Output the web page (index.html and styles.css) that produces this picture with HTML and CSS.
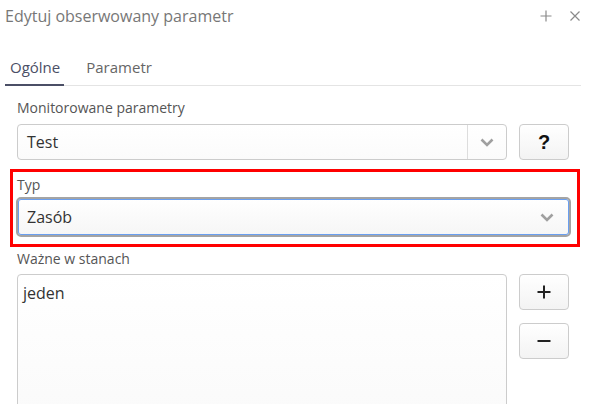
FILE: index.html
```html
<!DOCTYPE html>
<html lang="pl">
<head>
<meta charset="utf-8">
<title>Edytuj obserwowany parametr</title>
<link rel="stylesheet" href="styles.css">
</head>
<body>
<div class="dialog">
  <div class="header">
    <div class="title">Edytuj obserwowany parametr</div>
    <div class="header-icons">
      <svg class="hicon" width="12" height="12" viewBox="0 0 12 12"><path d="M6 0.5V11.5M0.5 6H11.5" stroke="#8a8a8a" stroke-width="1.2" fill="none"/></svg>
      <svg class="hicon" width="10" height="10" viewBox="0 0 10 10"><path d="M0.5 0.5L9.5 9.5M9.5 0.5L0.5 9.5" stroke="#8a8a8a" stroke-width="1.2" fill="none"/></svg>
    </div>
  </div>
  <div class="tabs">
    <div class="tab active">Ogólne</div>
    <div class="tab">Parametr</div>
  </div>
  <div class="content">
    <div class="field">
      <div class="label">Monitorowane parametry</div>
      <div class="row">
        <div class="select">
          <span class="value">Test</span>
          <span class="arrow divided">
            <svg width="14" height="9" viewBox="0 0 14 9"><path d="M1.5 1.5L7 7L12.5 1.5" stroke="#a0a0a0" stroke-width="2.6" fill="none"/></svg>
          </span>
        </div>
        <div class="btn q">?</div>
      </div>
    </div>
    <div class="highlight">
      <div class="label">Typ</div>
      <div class="select focused">
        <span class="value">Zasób</span>
        <span class="arrow">
          <svg width="14" height="9" viewBox="0 0 14 9"><path d="M1.5 1.5L7 7L12.5 1.5" stroke="#a0a0a0" stroke-width="2.6" fill="none"/></svg>
        </span>
      </div>
    </div>
    <div class="field states">
      <div class="label">Ważne w stanach</div>
      <div class="row">
        <div class="listbox"><div class="item">jeden</div></div>
        <div class="btns">
          <div class="btn">
            <svg width="16" height="16" viewBox="0 0 16 16"><path d="M8 1.5V14.5M1.5 8H14.5" stroke="#222" stroke-width="2" fill="none"/></svg>
          </div>
          <div class="btn">
            <svg width="16" height="16" viewBox="0 0 16 16"><path d="M1.5 8H14.5" stroke="#222" stroke-width="2" fill="none"/></svg>
          </div>
        </div>
      </div>
    </div>
  </div>
</div>
</body>
</html>
```
FILE: styles.css
```css
html, body {
  margin: 0;
  padding: 0;
  background: #fff;
  overflow: hidden;
}
body {
  font-family: "Open Sans", "DejaVu Sans", sans-serif;
  color: #333;
}
.header {
  height: 32px;
  display: flex;
  align-items: center;
  justify-content: space-between;
  padding: 0 11px 0 5px;
}
.title {
  font-size: 16px;
  color: #777;
  line-height: 20px;
}
.header-icons {
  display: flex;
  align-items: center;
  gap: 18px;
}
.hicon {
  display: block;
}
.tabs {
  display: flex;
  gap: 17px;
  margin: 0 10px 0 5px;
  border-bottom: 1px solid #e4e4e4;
}
.tab {
  font-size: 15px;
  line-height: 20px;
  padding: 25px 4px 7px 5px;
  color: #666;
  border-bottom: 2px solid transparent;
  margin-bottom: -1px;
}
.tab.active {
  color: #4b4f66;
  border-bottom-color: #4b4f66;
}
.content {
  padding: 13px 22px 0 17px;
}
.label {
  font-size: 14px;
  line-height: 18px;
  color: #555;
}
.field .label {
  margin-bottom: 7px;
}
.row {
  display: flex;
  gap: 12px;
  align-items: flex-start;
}
.select {
  flex: 1;
  height: 36px;
  box-sizing: border-box;
  border: 1px solid #ccc;
  border-radius: 4px;
  background: linear-gradient(#fff, #fbfbfb);
  display: flex;
  align-items: center;
}
.value {
  flex: 1;
  font-size: 16px;
  padding-left: 9px;
  color: #333;
}
.arrow {
  width: 38px;
  align-self: stretch;
  display: flex;
  align-items: center;
  justify-content: center;
}
.arrow.divided {
  border-left: 1px solid #ddd;
}
.btn {
  width: 50px;
  height: 36px;
  box-sizing: border-box;
  border: 1px solid #ccc;
  border-radius: 4px;
  background: linear-gradient(#fff, #f3f3f3);
  display: flex;
  align-items: center;
  justify-content: center;
}
.btn.q {
  font-family: "Liberation Sans", Arial, sans-serif;
  font-weight: 700;
  font-size: 20px;
  color: #111;
}
.highlight {
  margin: 9px -11px 0 -7px;
  border: 3px solid #f00;
  padding: 4px 6px 7px 3px;
}
.highlight .label {
  margin-bottom: 3px;
  padding-left: 1px;
}
.select.focused {
  height: 40px;
  border: 2px solid #a4a4a4;
  box-shadow: inset 0 0 0 1px #6a9ff0;
  border-radius: 5px;
  background: linear-gradient(#fff, #f6f6f6);
}
.select.focused .value {
  padding-left: 9px;
}
.select.focused .arrow {
  width: 44px;
}
.states {
  margin-top: 3px;
}
.states .label {
  margin-bottom: 6px;
}
.listbox {
  flex: 1;
  height: 150px;
  box-sizing: border-box;
  border: 1px solid #ccc;
  border-radius: 4px;
  background: linear-gradient(#fff, #fafafa);
  padding: 8px 5px;
}
.item {
  font-size: 16px;
  line-height: 20px;
  color: #333;
}
.btns {
  display: flex;
  flex-direction: column;
  gap: 13px;
}
```
